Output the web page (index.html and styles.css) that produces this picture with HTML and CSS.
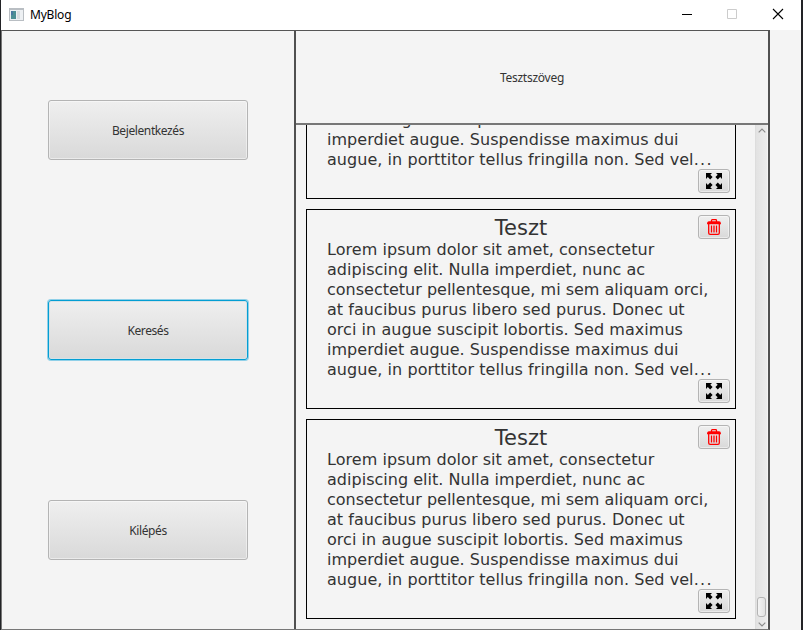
FILE: index.html
```html
<!DOCTYPE html>
<html lang="hu">
<head>
<meta charset="utf-8">
<title>MyBlog</title>
<link rel="stylesheet" href="styles.css">
</head>
<body>
<svg class="defs" aria-hidden="true">
  <symbol id="expand" viewBox="0 0 16 16">
    <g id="arrow"><path d="M0 0H6L4.300 1.700L6.600 4L4.200 6.400L1.800 4.100L0 6Z"/></g>
    <use href="#arrow" transform="matrix(-1 0 0 1 16 0)"/>
    <use href="#arrow" transform="matrix(1 0 0 -1 0 16)"/>
    <use href="#arrow" transform="matrix(-1 0 0 -1 16 16)"/>
  </symbol>
  <symbol id="trash" viewBox="0 0 14 16">
    <path d="M4.500 3V1.500Q4.500.7 5.300.7H8.700Q9.500.7 9.500 1.500V3M.7 4.500Q.7 3 2 3H12Q13.300 3 13.300 4.500ZM1.700 4.700V14Q1.700 15.300 3.100 15.300H10.900Q12.300 15.300 12.300 14V4.700M4.500 6.500V13.500M7 6.500V13.500M9.500 6.500V13.500" fill="none" stroke="#f00" stroke-width="1.300"/>
  </symbol>
</svg>
<div class="window">
  <header class="titlebar">
    <svg class="appicon" viewBox="0 0 15 13"><path fill="#b9bec3" d="M0 0H15V13H0Z"/><path fill="#edf0f3" d="M1 2H14V12H1Z"/><path fill="#4d8f94" d="M2 3H7V11H2Z"/><path fill="#4878a0" d="M2 3H4V7H2Z"/><path fill="#dadde0" d="M8 3H11V11H8Z"/></svg>
    <span class="name">MyBlog</span>
    <svg class="controls" viewBox="0 0 104 12"><path d="M1 6.500H11" stroke="#000"/><path d="M46.500 1.500H55.500V10.500H46.500Z" fill="none" stroke="#ccc"/><path d="M92 1L102 11M102 1L92 11" stroke="#000" stroke-width="1.100"/></svg>
  </header>
  <main class="content">
    <nav class="menu">
      <button>Bejelentkezés</button>
      <button class="focused">Keresés</button>
      <button>Kilépés</button>
    </nav>
    <section class="blog">
      <div class="heading">Tesztszöveg</div>
      <div class="scroller">
        <div class="posts">
          <article class="post partial">
            <p><span class="l5">orci in augue suscipit lobortis. Sed maximus</span><span class="l6">imperdiet augue. Suspendisse maximus dui</span><span class="l7">augue, in porttitor tellus fringilla non. Sed vel<i>...</i></span></p>
            <div class="tools"><button><svg class="expand"><use href="#expand"/></svg></button></div>
          </article>
          <article class="post">
            <h2>Teszt</h2>
            <p><span class="l1">Lorem ipsum dolor sit amet, consectetur</span><span class="l2">adipiscing elit. Nulla imperdiet, nunc ac</span><span class="l3">consectetur pellentesque, mi sem aliquam orci,</span><span class="l4">at faucibus purus libero sed purus. Donec ut</span><span class="l5">orci in augue suscipit lobortis. Sed maximus</span><span class="l6">imperdiet augue. Suspendisse maximus dui</span><span class="l7">augue, in porttitor tellus fringilla non. Sed vel<i>...</i></span></p>
            <div class="tools"><button><svg class="trash"><use href="#trash"/></svg></button><button><svg class="expand"><use href="#expand"/></svg></button></div>
          </article>
          <article class="post">
            <h2>Teszt</h2>
            <p><span class="l1">Lorem ipsum dolor sit amet, consectetur</span><span class="l2">adipiscing elit. Nulla imperdiet, nunc ac</span><span class="l3">consectetur pellentesque, mi sem aliquam orci,</span><span class="l4">at faucibus purus libero sed purus. Donec ut</span><span class="l5">orci in augue suscipit lobortis. Sed maximus</span><span class="l6">imperdiet augue. Suspendisse maximus dui</span><span class="l7">augue, in porttitor tellus fringilla non. Sed vel<i>...</i></span></p>
            <div class="tools"><button><svg class="trash"><use href="#trash"/></svg></button><button><svg class="expand"><use href="#expand"/></svg></button></div>
          </article>
        </div>
        <div class="scrollbar">
          <svg class="chevron" viewBox="0 0 8 5"><path d="M.7 4.300L4 1L7.300 4.300"/></svg>
          <div class="thumb"></div>
          <svg class="chevron" viewBox="0 0 8 5"><path d="M.7.7L4 4L7.300.7"/></svg>
        </div>
      </div>
    </section>
  </main>
</div>
</body>
</html>
```
FILE: styles.css
```css
* { box-sizing: border-box; }
body {
  margin: 0;
  width: 803px;
  height: 630px;
  overflow: hidden;
  background: #222326;
  padding: 0 2px 0 1px;
  font-family: "Noto Sans", "Open Sans", sans-serif;
  font-size: 12px;
  color: #333;
}
.defs { position: absolute; width: 0; height: 0; }
.window { height: 630px; background: #f4f4f4; display: flex; flex-direction: column; }
.titlebar {
  height: 30px;
  flex: none;
  background: #fff;
  display: flex;
  align-items: center;
  padding: 0 16px 2px 8px;
  color: #000;
}
.appicon { width: 15px; height: 13px; }
.name { margin-left: 6px; padding-top: 1px; letter-spacing: -0.2px; }
.controls { width: 104px; height: 12px; margin-left: auto; }
.content {
  width: 769px;
  height: 600px;
  display: flex;
  border: 1px solid #777;
  border-top-color: #555;
  border-right: 2px solid #505050;
}
button {
  font: inherit;
  color: inherit;
  padding: 0;
  border: 1px solid #b4b4b4;
  border-radius: 3px;
  background: linear-gradient(#efefef, #d9d9d9);
  box-shadow: inset 0 0 0 1px rgba(255, 255, 255, .45);
}
.menu {
  width: 292px;
  flex: none;
  display: flex;
  flex-direction: column;
  align-items: center;
  gap: 140px;
  padding-top: 69px;
}
.menu button { width: 200px; height: 60px; flex: none; letter-spacing: -0.4px; }
.menu .focused { border-color: #039ed3; box-shadow: 0 0 0 1px #90d0e8, inset 0 0 0 1px #d5e2e7; }
.blog { flex: 1; border-left: 2px solid #505050; display: flex; flex-direction: column; min-width: 0; }
.heading {
  height: 94px;
  flex: none;
  display: flex;
  align-items: center;
  justify-content: center;
  border-bottom: 2px solid #777;
  letter-spacing: -0.25px;
}
.scroller { flex: 1; min-height: 0; display: flex; justify-content: space-between; overflow: hidden; padding-right: 1px; }
.posts {
  padding: 0 0 10px 10px;
  display: flex;
  flex-direction: column;
  justify-content: flex-end;
  gap: 10px;
}
.post {
  width: 430px;
  height: 200px;
  flex: none;
  border: 1px solid #000;
  display: grid;
  grid-template: 30px 1fr / 20px 387px 21px;
}
.partial { height: 96px; grid-template-rows: 7px 1fr; border-top: 0; }
h2 {
  grid-area: 1 / 1 / 2 / 4;
  margin: 0;
  padding-top: 6px;
  text-align: center;
  font: 21px/24px "DejaVu Sans", sans-serif;
}
.post p { grid-area: 2 / 2; margin: 0; font: 16px/20px "DejaVu Sans", sans-serif; }
.post span { display: block; white-space: nowrap; }
.l1, .l4, .l5, .l7 { letter-spacing: 0.05px; }
.l2, .l6 { letter-spacing: 0.025px; }
.l7 i { font-style: normal; letter-spacing: 1.3px; }
.tools {
  grid-area: 1 / 3 / 3 / 4;
  display: flex;
  flex-direction: column;
  justify-content: space-between;
  justify-self: end;
  padding: 5px;
}
.partial .tools { justify-content: flex-end; }
.tools button { width: 32px; height: 24px; display: flex; align-items: center; justify-content: center; }
.expand { width: 16px; height: 16px; }
.trash { width: 14px; height: 16px; }
.scrollbar {
  width: 12px;
  border-left: 1px solid #ddd;
  background: linear-gradient(90deg, #e2e2e2, #ececec);
  display: flex;
  flex-direction: column;
  align-items: center;
  padding: 3px 0 2px;
}
.chevron { width: 8px; height: 5px; fill: none; stroke: #8a8a8a; stroke-width: 1.2; }
.thumb {
  width: 9px;
  height: 20px;
  margin: auto 0 5px;
  border: 1px solid #b4b4b4;
  border-radius: 3px;
  background: linear-gradient(90deg, #f4f4f4, #e2e2e2);
}
```
